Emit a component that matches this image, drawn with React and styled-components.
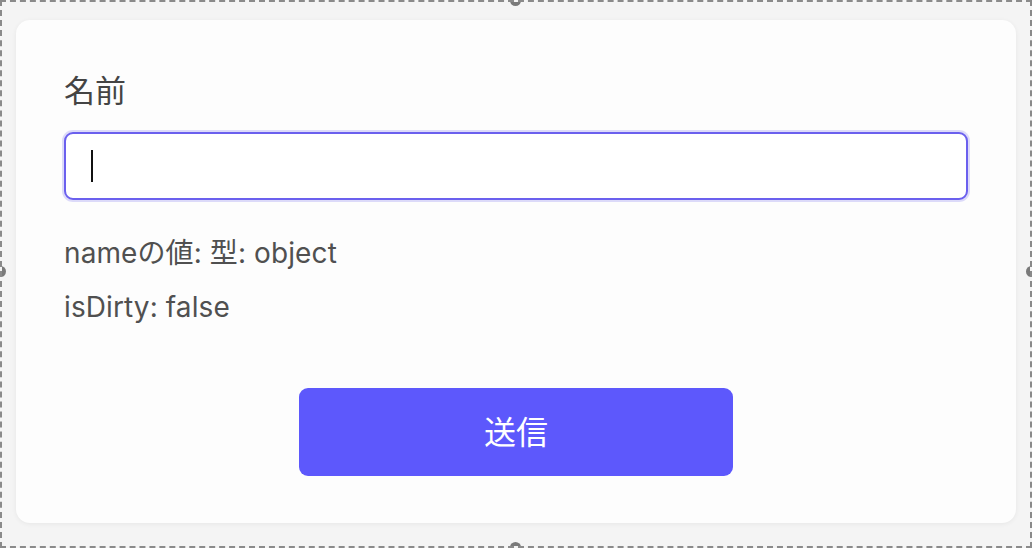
import React from "react";
import styled, { createGlobalStyle } from "styled-components";

const Global = createGlobalStyle`
  html, body { margin: 0; padding: 0; background: #f3f3f3; }
  * { box-sizing: border-box; }
`;

const Frame = styled.div`
  position: relative;
  width: 1032px;
  height: 548px;
  border: 2px dashed #8a8a8a;
  background: #f4f4f4;
  padding: 18px 14px 23px 14px;
  font-family: Inter, "Noto Sans CJK JP", sans-serif;
  overflow: hidden;
`;

const Handle = styled.span`
  position: absolute;
  width: 11px;
  height: 11px;
  border-radius: 50%;
  background: #7a7a7a;
  ${(p) => p.$pos}
`;

const Card = styled.form`
  height: 100%;
  background: #fdfdfd;
  border-radius: 14px;
  box-shadow: 0 1px 5px rgba(0, 0, 0, 0.06);
  padding: 48px 48px 47px 48px;
  display: flex;
  flex-direction: column;
`;

const Label = styled.label`
  font-size: 31px;
  line-height: 42px;
  color: #444;
  font-family: "Noto Sans CJK JP", sans-serif;
`;

const Field = styled.div`
  margin-top: 22px;
  height: 68px;
  border: 2px solid #6b60ee;
  border-radius: 9px;
  box-shadow: 0 0 0 2px rgba(107, 96, 238, 0.22);
  background: #fff;
  display: flex;
  align-items: center;
  padding-left: 25px;
`;

const Caret = styled.span`
  width: 2px;
  height: 32px;
  background: #111;
  flex: none;
`;

const Input = styled.input`
  flex: 1;
  border: none;
  outline: none;
  background: transparent;
  font-size: 28px;
  font-family: inherit;
`;

const Info = styled.p`
  margin: ${(p) => p.$top}px 0 0 0;
  font-size: 28px;
  line-height: 40px;
  color: #505050;
  letter-spacing: 0.1px;
`;

const Submit = styled.button`
  align-self: center;
  margin-top: auto;
  width: 434px;
  height: 88px;
  border: none;
  border-radius: 9px;
  background: #5d58fc;
  color: #fff;
  font-size: 32px;
  padding: 0 0 5px 0;
  font-family: "Noto Sans CJK JP", sans-serif;
`;

export default function App() {
  return (
    <>
      <Global />
      <Frame>
        <Card onSubmit={(e) => e.preventDefault()}>
          <Label htmlFor="name">名前</Label>
          <Field>
            <Caret />
            <Input id="name" aria-label="名前" />
          </Field>
          <Info $top={33}>nameの値: 型: object</Info>
          <Info $top={14}>isDirty: false</Info>
          <Submit type="submit">送信</Submit>
        </Card>
        <Handle $pos="top: -7px; left: 508px;" />
        <Handle $pos="bottom: -7px; left: 508px;" />
        <Handle $pos="left: -7px; top: 264px;" />
        <Handle $pos="right: -7px; top: 264px;" />
      </Frame>
    </>
  );
}
